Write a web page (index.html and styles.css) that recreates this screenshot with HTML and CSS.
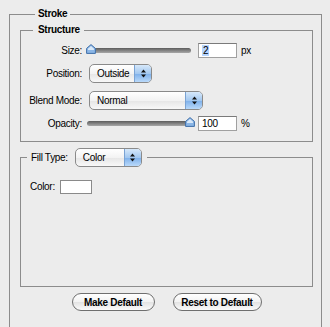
FILE: index.html
```html
<!DOCTYPE html>
<html lang="en">
<head>
  <meta charset="UTF-8">
  <title>Stroke</title>
  <link rel="stylesheet" href="styles.css">
</head>
<body>

<div class="dialog">
  <fieldset class="box box-outer">
    <legend class="title title-outer">Stroke</legend>

    <fieldset class="box box-structure">
      <legend class="title title-structure">Structure</legend>
      <div class="rows">
        <div class="row row-size">
          <span class="label">Size:</span>
          <div class="slider">
            <div class="track"></div>
            <svg class="thumb thumb-size" width="10" height="10" viewBox="0 0 10 10">
              <path d="M5 0.6 L9.4 4.4 L9.4 9.4 L0.6 9.4 L0.6 4.4 Z" fill="#8bb6e6" stroke="#3f6fa8" stroke-width="1"/>
              <path d="M5 2 L8 4.7 L8 6 L2 6 L2 4.7 Z" fill="#d8e8f8"/>
            </svg>
          </div>
          <span class="field"><span class="sel">2</span></span>
          <span class="unit">px</span>
        </div>

        <div class="row row-position">
          <span class="label">Position:</span>
          <div class="popup popup-position">
            <span class="popup-text">Outside</span>
            <span class="popup-arrows">
              <svg width="7" height="11" viewBox="0 0 7 11"><path d="M1 4.5 L3.5 1.5 L6 4.5 Z M1 6.5 L6 6.5 L3.5 9.5 Z" fill="#111"/></svg>
            </span>
          </div>
        </div>

        <div class="row row-blend">
          <span class="label">Blend Mode:</span>
          <div class="popup popup-blend">
            <span class="popup-text">Normal</span>
            <span class="popup-arrows">
              <svg width="7" height="11" viewBox="0 0 7 11"><path d="M1 4.5 L3.5 1.5 L6 4.5 Z M1 6.5 L6 6.5 L3.5 9.5 Z" fill="#111"/></svg>
            </span>
          </div>
        </div>

        <div class="row row-opacity">
          <span class="label">Opacity:</span>
          <div class="slider">
            <div class="track"></div>
            <svg class="thumb thumb-opacity" width="10" height="10" viewBox="0 0 10 10">
              <path d="M5 0.6 L9.4 4.4 L9.4 9.4 L0.6 9.4 L0.6 4.4 Z" fill="#8bb6e6" stroke="#3f6fa8" stroke-width="1"/>
              <path d="M5 2 L8 4.7 L8 6 L2 6 L2 4.7 Z" fill="#d8e8f8"/>
            </svg>
          </div>
          <span class="field">100</span>
          <span class="unit">%</span>
        </div>
      </div>
    </fieldset>

    <fieldset class="box box-fill">
      <legend class="fill-legend">
        <span class="fill-label">Fill Type:</span>
        <div class="popup popup-fill">
          <span class="popup-text">Color</span>
          <span class="popup-arrows">
            <svg width="7" height="11" viewBox="0 0 7 11"><path d="M1 4.5 L3.5 1.5 L6 4.5 Z M1 6.5 L6 6.5 L3.5 9.5 Z" fill="#111"/></svg>
          </span>
        </div>
      </legend>
      <div class="fill-body">
        <span class="color-label">Color:</span>
        <span class="swatch"></span>
      </div>
    </fieldset>

    <div class="buttons">
      <button type="button" class="btn btn-make">Make Default</button>
      <button type="button" class="btn btn-reset">Reset to Default</button>
    </div>
  </fieldset>
</div>

</body>
</html>
```

FILE: styles.css
```css
html {
  overflow: hidden;
}
body {
  margin: 0;
  padding: 8px 8px 0 9px;
  background: #ececec;
  color: #000;
  font-family: 'Liberation Sans', Arial, sans-serif;
  font-size: 10px;
  letter-spacing: -0.3px;
}
.box {
  margin: 0;
  padding: 0;
  border: 1px solid #8c8c8c;
  min-inline-size: 0;
}
.box-outer {
  padding: 0 8px 16px 10px;
  border-bottom: none;
}
.box-structure {
  margin-top: 4px;
}
.box-fill {
  margin-top: 6px;
}
.title {
  font-weight: bold;
  line-height: 12px;
}
.title-outer {
  margin-left: 15px;
  padding: 0 3px;
}
.title-structure {
  margin-left: 12px;
  padding: 0 4px 0 5px;
}
.rows {
  padding: 4px 0 8px 5px;
}
.row {
  display: flex;
  align-items: center;
  height: 20px;
}
.row-position {
  margin-top: 3px;
}
.row-blend {
  margin-top: 7px;
}
.row-opacity {
  margin-top: 3px;
}
.label {
  flex: none;
  width: 56px;
  margin-right: 5px;
  text-align: right;
  white-space: nowrap;
}
.slider {
  position: relative;
  width: 104px;
  height: 10px;
}
.track {
  margin-top: 3px;
  height: 5px;
  border-radius: 3px;
  background: linear-gradient(#5c5c5c, #8a8a8a 60%, #a8a8a8);
}
.thumb {
  position: absolute;
  top: -1px;
}
.thumb-size {
  left: -1px;
}
.thumb-opacity {
  left: 98px;
}
.field {
  box-sizing: border-box;
  width: 39px;
  height: 15px;
  margin-left: 7px;
  padding-left: 3px;
  line-height: 13px;
  background: #fff;
  border: 1px solid #a0a0a0;
  border-top-color: #7a7a7a;
}
.sel {
  background: #b5d5ff;
  padding: 0 1px;
}
.unit {
  margin-left: 4px;
}
.popup {
  display: flex;
  box-sizing: border-box;
  height: 19px;
  margin-left: 2px;
  border: 1px solid #8a8a8a;
  border-radius: 5px;
  overflow: hidden;
  background: linear-gradient(#ffffff, #f3f3f3 50%, #e6e6e6 52%, #f8f8f8);
}
.popup-position {
  width: 63px;
}
.popup-blend {
  width: 114px;
}
.popup-fill {
  width: 67px;
  margin-left: 7px;
}
.popup-text {
  flex: 1;
  padding-left: 7px;
  line-height: 17px;
}
.popup-arrows {
  width: 16px;
  display: flex;
  align-items: center;
  justify-content: center;
  border-left: 1px solid #7aa3d4;
  background: linear-gradient(#d6e8fa, #a3c8f0 50%, #7eb0ea 52%, #b9d9fa);
}
.fill-legend {
  display: flex;
  align-items: center;
  margin-left: 6px;
  padding: 0 5px 0 4px;
}
.fill-body {
  box-sizing: border-box;
  height: 119px;
  padding: 13px 0 0 9px;
  display: flex;
  align-items: flex-start;
}
.color-label {
  line-height: 14px;
}
.swatch {
  box-sizing: border-box;
  width: 32px;
  height: 14px;
  margin-left: 5px;
  background: #fff;
  border: 1px solid #8a8a8a;
}
.buttons {
  display: flex;
  justify-content: center;
  gap: 18px;
  margin-top: 6px;
}
.btn {
  box-sizing: border-box;
  height: 18px;
  padding: 0;
  border: 1px solid #6f6f6f;
  border-radius: 9px;
  background: linear-gradient(#ffffff, #f2f2f2 50%, #e3e3e3 52%, #fbfbfb);
  font-family: 'Liberation Sans', Arial, sans-serif;
  font-size: 10px;
  font-weight: bold;
  letter-spacing: -0.3px;
  color: #000;
}
.btn-make {
  width: 83px;
}
.btn-reset {
  width: 89px;
}
```
